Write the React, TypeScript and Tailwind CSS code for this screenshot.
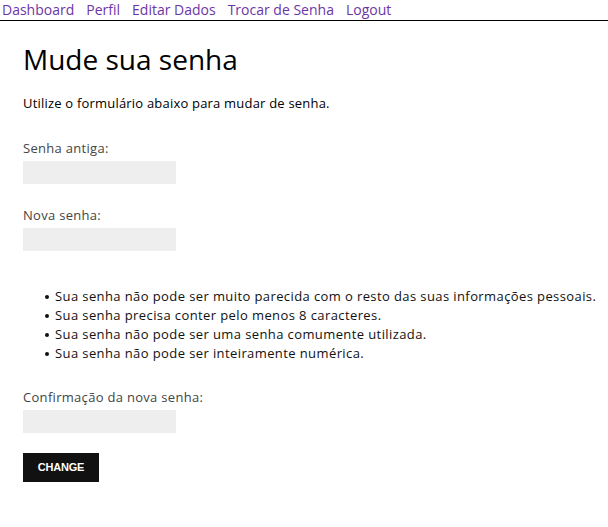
const links = ["Dashboard", "Perfil", "Editar Dados", "Trocar de Senha", "Logout"];

const rules = [
  "Sua senha não pode ser muito parecida com o resto das suas informações pessoais.",
  "Sua senha precisa conter pelo menos 8 caracteres.",
  "Sua senha não pode ser uma senha comumente utilizada.",
  "Sua senha não pode ser inteiramente numérica.",
];

const Field = ({ label }: { label: string }) => (
  <div>
    <label className="block text-[13px] leading-[19px] tracking-[0.3px] text-[#444]">{label}</label>
    <input type="password" className="mt-[3px] block h-[23px] w-[153px] bg-[#eeeeee] outline-none" />
  </div>
);

export default function App() {
  return (
    <div className="min-h-[527px] overflow-hidden bg-white font-['Open_Sans',sans-serif] text-black">
      <nav className="flex h-[21px] items-center gap-[12px] border-b border-black px-[2px] text-[14px] text-[#6c35a6]">
        {links.map((link) => (
          <a key={link} href="#" className="leading-[20px]">
            {link}
          </a>
        ))}
      </nav>

      <main className="px-[23px]">
        <h1 className="mt-[21px] text-[28px] leading-[34px] text-black">Mude sua senha</h1>
        <p className="mt-[18px] text-[13px] leading-[19px] tracking-[0.2px]">
          Utilize o formulário abaixo para mudar de senha.
        </p>

        <form className="mt-[26px]">
          <Field label="Senha antiga:" />
          <div className="mt-[22px]">
            <Field label="Nova senha:" />
          </div>

          <ul className="mt-[36px] pl-[22px] text-[13px] leading-[19px] tracking-[0.4px] text-[#111]">
            {rules.map((rule) => (
              <li key={rule} className="flex items-center whitespace-nowrap">
                <span className="mr-[6px] h-[4px] w-[4px] shrink-0 rounded-full bg-[#111]" />
                {rule}
              </li>
            ))}
          </ul>

          <div className="mt-[25px]">
            <Field label="Confirmação da nova senha:" />
          </div>

          <button
            type="button"
            className="mt-[20px] h-[29px] w-[76px] bg-[#111] font-['Liberation_Sans',sans-serif] text-[11px] font-bold tracking-[-0.2px] text-white"
          >
            CHANGE
          </button>
        </form>
      </main>
    </div>
  );
}
